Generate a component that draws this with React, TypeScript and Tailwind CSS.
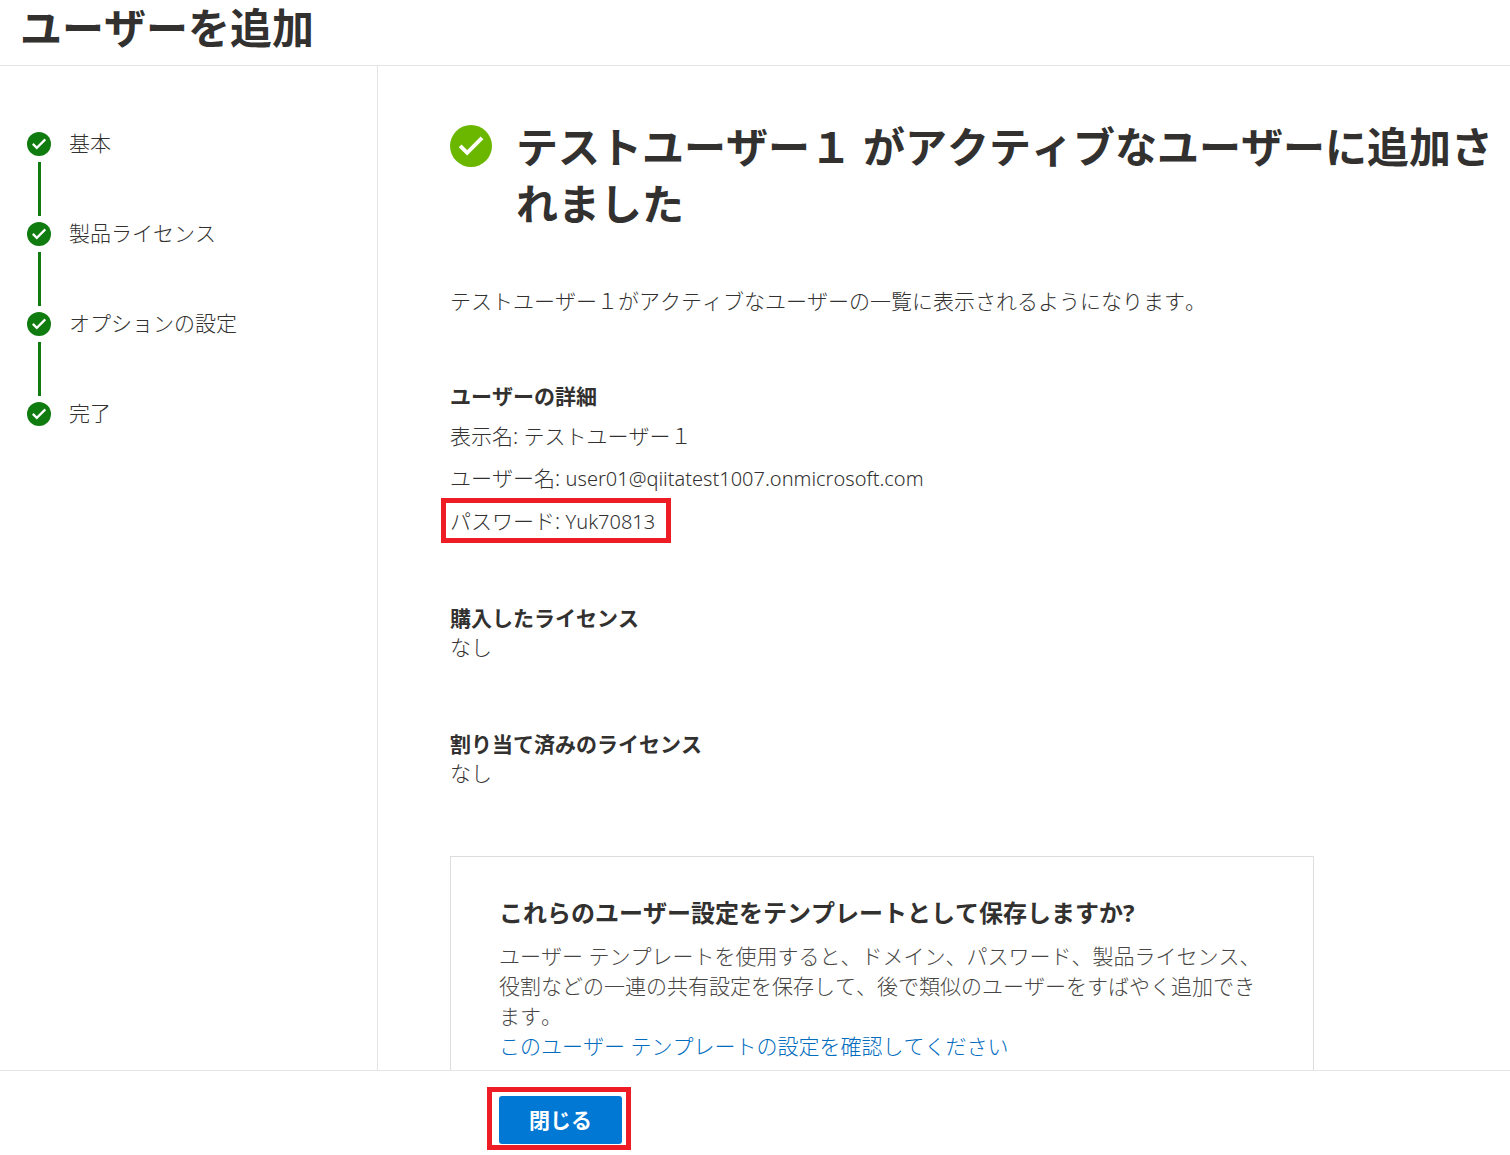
import React from "react";
import clsx from "clsx";

interface CheckIconProps {
  className?: string;
}

const CheckIcon: React.FC<CheckIconProps> = ({ className }) => (
  <svg
    viewBox="0 0 24 24"
    aria-hidden="true"
    className={clsx("shrink-0", className)}
  >
    <circle cx="12" cy="12" r="12" fill="currentColor" />
    <path
      d="M5.8 11.9 9.8 15.9 18.3 7.4"
      fill="none"
      stroke="#fff"
      strokeWidth="2.2"
    />
  </svg>
);

// Red frame drawn over whatever it marks
const Highlight: React.FC<{ className: string }> = ({ className }) => (
  <span
    aria-hidden="true"
    className={clsx(
      "pointer-events-none absolute border-5 border-[#ee1c25]",
      className
    )}
  />
);

const steps = ["基本", "製品ライセンス", "オプションの設定", "完了"];

const licenses = [
  { title: "購入したライセンス", value: "なし" },
  { title: "割り当て済みのライセンス", value: "なし" },
];

const StepList = () => (
  <ol>
    {steps.map((step, index) => (
      <li key={step}>
        <div className="flex h-6 items-center gap-[18px]">
          <CheckIcon className="size-6 text-[#107c10]" />
          <span className="pb-0.5">{step}</span>
        </div>
        {index < steps.length - 1 && (
          <div className="my-1.5 ml-[11px] h-[54px] w-[3px] bg-[#107c10]" />
        )}
      </li>
    ))}
  </ol>
);

const App: React.FC = () => {
  return (
    <div
      lang="ja"
      className="flex h-screen flex-col bg-white font-['Noto_Sans','Noto_Sans_CJK_JP',sans-serif] text-[21px] leading-[30px] font-light text-[#323130] [font-kerning:none]"
    >
      <header className="shrink-0 border-b border-[#e5e5e5] px-5 pb-[9px]">
        <h1 className="text-[42px] leading-14 font-bold">ユーザーを追加</h1>
      </header>

      <div className="flex min-h-0 flex-1">
        <nav
          aria-label="手順"
          className="w-[378px] shrink-0 border-r border-[#e5e5e5] pt-[66px] pl-[27px]"
        >
          <StepList />
        </nav>

        <main className="min-w-0 flex-1 overflow-y-auto pt-[52px] pr-4 pl-[72px] [scrollbar-width:none]">
          <div className="flex items-start gap-6">
            <CheckIcon className="mt-[7px] size-[42px] text-[#6bb700]" />
            <h2 className="text-[42px] leading-[57px] font-bold">
              テストユーザー１ がアクティブなユーザーに追加されました
            </h2>
          </div>

          <p className="mt-[54px]">
            テストユーザー１がアクティブなユーザーの一覧に表示されるようになります。
          </p>

          <section className="mt-[65px]">
            <h3 className="font-bold">ユーザーの詳細</h3>
            <div className="mt-1 leading-[42px]">
              <p>表示名: テストユーザー１</p>
              <p>
                ユーザー名:{" "}
                <span className="text-xl leading-[42px]">
                  user01@qiitatest1007.onmicrosoft.com
                </span>
              </p>
              <p className="relative w-fit">
                パスワード:{" "}
                <span className="text-xl leading-[42px]">Yuk70813</span>
                <Highlight className="-top-0.5 -right-4 bottom-0 -left-[9px]" />
              </p>
            </div>
          </section>

          <div className="mt-[61px] flex flex-col gap-[68px]">
            {licenses.map((license) => (
              <section key={license.title}>
                <h3 className="leading-7 font-bold">{license.title}</h3>
                <p>{license.value}</p>
              </section>
            ))}
          </div>

          <section className="mt-[68px] max-w-[864px] border border-[#dddddd] px-12 pt-10 pb-12">
            <h3 className="text-2xl leading-8 font-bold">
              これらのユーザー設定をテンプレートとして保存しますか?
            </h3>
            <p className="mt-3 text-[#484644]">
              ユーザー テンプレートを使用すると、ドメイン、パスワード、製品ライセンス、役割などの一連の共有設定を保存して、後で類似のユーザーをすばやく追加できます。
            </p>
            <a href="#template" className="text-[#006cbe]">
              このユーザー テンプレートの設定を確認してください
            </a>
          </section>
        </main>
      </div>

      <footer className="shrink-0 border-t border-[#e5e5e5] pt-[25px] pb-[11px] pl-[499px]">
        <div className="relative w-fit">
          <button
            type="button"
            className="block h-12 rounded-[3px] bg-[#0078d4] px-[30px] font-bold text-white"
          >
            閉じる
          </button>
          <Highlight className="-top-[9px] -right-[9px] -bottom-1.5 -left-3" />
        </div>
      </footer>
    </div>
  );
};

export default App;
